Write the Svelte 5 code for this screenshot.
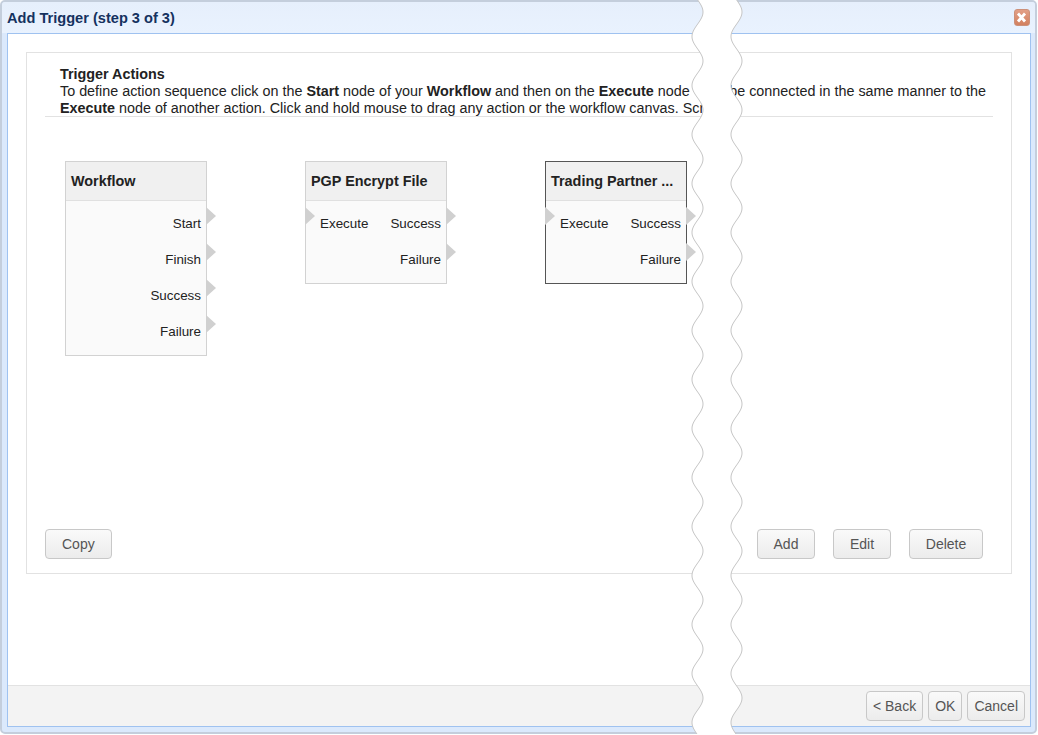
<script>
  const nodes = [
    { title: 'Workflow', rows: [['', 'Start'], ['', 'Finish'], ['', 'Success'], ['', 'Failure']] },
    { title: 'PGP Encrypt File', rows: [['Execute', 'Success'], ['', 'Failure']] },
    { title: 'Trading Partner ...', selected: true, rows: [['Execute', 'Success'], ['', 'Failure']] }
  ];

  // torn strip: two sine edges, one bulge every 49px
  function edge(mid) {
    const pts = [];
    for (let y = -2; y <= 737; y += 1) {
      const x = mid + 5.5 * Math.cos((2 * Math.PI * (y - 12)) / 49);
      pts.push(`${x.toFixed(2)},${y}`);
    }
    return pts;
  }

  const leftEdge = edge(697.5);
  const rightEdge = edge(736.5);
  const strip = [...leftEdge, ...[...rightEdge].reverse()].join(' ');
</script>

<div class="window">
  <header class="titlebar">
    <span class="title">Add Trigger (step 3 of 3)</span>
    <button class="close" aria-label="Close">
      <svg width="16" height="16" viewBox="0 0 16 16">
        <path d="M4 3.5 L11 11.5 M11 3.5 L4 11.5" stroke="#fff" stroke-width="2.8" />
      </svg>
    </button>
  </header>

  <div class="inner">
    <main class="content">
      <section class="panel">
        <div class="intro">
          <div class="heading">Trigger Actions</div>
          <p class="line">
            <span>To define action sequence click on the <b>Start</b> node of your <b>Workflow</b> and then on the <b>Execute</b> node</span>
            <span>be connected in the same manner to the</span>
          </p>
          <p><b>Execute</b> node of another action. Click and hold mouse to drag any action or the workflow canvas. Scroll</p>
        </div>

        <div class="canvas">
          {#each nodes as node}
            <div class="node" class:selected={node.selected}>
              <div class="node-title">{node.title}</div>
              <div class="node-rows">
                {#each node.rows as [input, output]}
                  <div class="row">
                    {#if input}<span class="port port-in"></span><span>{input}</span>{/if}
                    <span class="out">{output}</span>
                    <span class="port port-out"></span>
                  </div>
                {/each}
              </div>
            </div>
          {/each}
        </div>

        <div class="actions">
          <button class="btn">Copy</button>
          <div class="actions-right">
            <button class="btn w58">Add</button>
            <button class="btn w58">Edit</button>
            <button class="btn w74">Delete</button>
          </div>
        </div>
      </section>
    </main>

    <footer class="footer">
      <button class="btn">&lt; Back</button>
      <button class="btn">OK</button>
      <button class="btn">Cancel</button>
    </footer>
  </div>

  <svg class="tear" width="1038" height="735" viewBox="0 0 1038 735">
    <polygon points={strip} fill="#fff" />
    <polyline points={leftEdge.join(' ')} fill="none" stroke="#c6c6c6" />
    <polyline points={rightEdge.join(' ')} fill="none" stroke="#c6c6c6" />
  </svg>
</div>

<style>
  :global(body) {
    background: #fff;
    overflow: hidden;
  }

  * {
    box-sizing: border-box;
  }

  .window {
    position: relative;
    width: 1037px;
    height: 734px;
    display: flex;
    flex-direction: column;
    padding: 0 4px 5px 5px;
    background: #dbe9fc;
    border: 2px solid #c4cedc;
    border-radius: 5px;
    font-family: "Liberation Sans", Arial, sans-serif;
    font-size: 14.35px;
    color: #222;
  }

  .titlebar {
    height: 31px;
    flex: none;
    display: flex;
    align-items: center;
    justify-content: space-between;
    background: linear-gradient(#e6effc, #e9f2fe);
    margin: 0 -4px 0 -5px;
    padding: 0 5px;
    border-radius: 3px 3px 0 0;
  }

  .title {
    font-size: 14.6px;
    font-weight: bold;
    color: #15325f;
  }

  .close {
    width: 16px;
    height: 17px;
    padding: 0;
    border: 1px solid #cc9079;
    border-radius: 3px;
    background: linear-gradient(#e29f86, #d2805f);
  }

  .close svg {
    display: block;
    margin: 0 -1px;
  }

  .inner {
    flex: 1;
    min-height: 0;
    display: flex;
    flex-direction: column;
    border: 1px solid #9fc2f0;
  }

  .content {
    flex: 1;
    background: #fff;
    padding: 18px 18px 0;
  }

  .panel {
    height: 522px;
    border: 1px solid #e2e2e2;
    display: flex;
    flex-direction: column;
    padding: 13px 18px 14px;
  }

  .intro {
    height: 51px;
    flex: none;
    padding: 0 7px 0 15px;
    border-bottom: 1px solid #e2e2e2;
    line-height: 17px;
  }

  .heading {
    font-weight: bold;
  }

  .intro p {
    margin: 0;
    white-space: nowrap;
  }

  .intro .line {
    display: flex;
    justify-content: space-between;
  }

  .canvas {
    flex: 1;
    display: flex;
    align-items: flex-start;
    gap: 98px;
    padding: 44px 0 0 20px;
  }

  .node {
    width: 142px;
    border: 1px solid #d2d2d2;
    background: #fafafa;
  }

  .node.selected {
    border-color: #555;
  }

  .node-title {
    height: 39px;
    line-height: 39px;
    padding-left: 5px;
    font-size: 14.4px;
    font-weight: bold;
    background: #f0f0f0;
    border-bottom: 1px solid #e0e0e0;
    white-space: nowrap;
    overflow: hidden;
  }

  .node-rows {
    padding: 4px 0 6px;
  }

  .row {
    position: relative;
    height: 36px;
    display: flex;
    align-items: center;
    justify-content: space-between;
    padding: 0 5px 0 14px;
    font-size: 13.4px;
  }

  .out {
    margin-left: auto;
  }

  .port {
    position: absolute;
    top: 2px;
    width: 0;
    height: 0;
    border-top: 9px solid transparent;
    border-bottom: 9px solid transparent;
    border-left: 10px solid #d0d0d0;
  }

  .port-out {
    right: -10px;
  }

  .port-in {
    left: -1px;
  }

  .actions {
    display: flex;
    justify-content: space-between;
    align-items: center;
  }

  .actions-right {
    display: flex;
    gap: 18px;
    margin-right: 10px;
  }

  .btn {
    height: 30px;
    padding: 0 16px;
    font-family: inherit;
    font-size: 14px;
    color: #555;
    background: linear-gradient(#fafafa, #ececec);
    border: 1px solid #c8c8c8;
    border-radius: 4px;
  }

  .w58 { width: 58px; padding: 0; }
  .w74 { width: 74px; padding: 0; }

  .footer {
    height: 41px;
    flex: none;
    display: flex;
    justify-content: flex-end;
    align-items: flex-start;
    gap: 5px;
    padding: 5px 5px 0 0;
    background: #f3f3f3;
    border-top: 1px solid #e2e2e2;
  }

  .footer .btn {
    padding: 0 6px;
  }

  .tear {
    position: absolute;
    left: -2px;
    top: -2px;
    pointer-events: none;
  }
</style>
